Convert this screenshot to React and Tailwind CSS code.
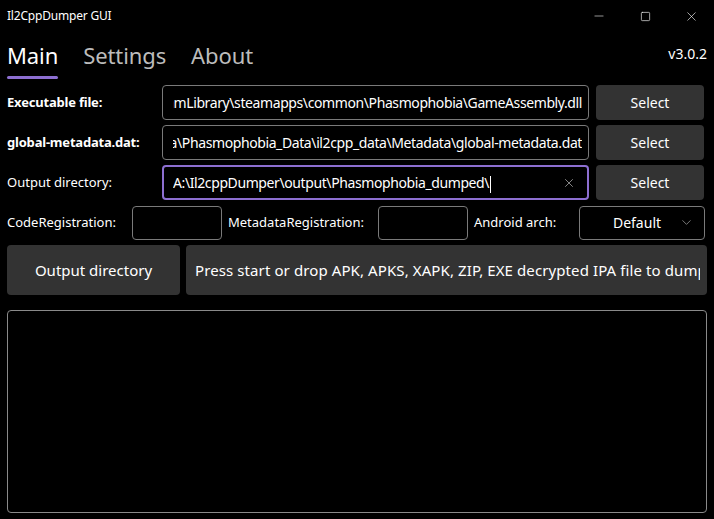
import { X, Minus, Square, ChevronDown } from 'lucide-react'

const FONT = { fontFamily: '"Noto Sans", "Open Sans", sans-serif' }

const PathBox = ({ value, focused }) => (
  <div
    className={
      'relative h-[35px] w-[427px] rounded-[4px] flex items-center ' +
      (focused ? 'border-2 border-[#8d6fd1] pl-[9px] pr-[30px]' : 'border border-[#7a7a7a] pl-[10px] pr-[6px]')
    }
  >
    <div className={'flex-1 min-w-0 flex overflow-hidden ' + (focused ? '' : 'justify-end')}>
      <span className="whitespace-nowrap text-[14px] text-white tracking-[-0.4px]">
        {value}
        {focused && <span className="inline-block w-px h-[17px] bg-white align-middle ml-px" />}
      </span>
    </div>
    {focused && (
      <X size={14} strokeWidth={1.2} className="absolute right-[11px] top-[9px] text-[#bdbdbd]" />
    )}
  </div>
)

const SelectBtn = () => (
  <button className="h-[35px] w-[108px] rounded-[4px] bg-[#333333] text-white text-[14px]">Select</button>
)

const Row = ({ label, bold, value, focused }) => (
  <div className="flex items-center h-[35px]">
    <div className={'w-[155px] text-white text-[13px] whitespace-nowrap ' + (bold ? 'font-bold tracking-[-0.2px]' : '')}>{label}</div>
    <PathBox value={value} focused={focused} />
    <div className="ml-[7px]">
      <SelectBtn />
    </div>
  </div>
)

const SmallBox = () => <div className="h-[34px] w-[90px] rounded-[4px] border border-[#7a7a7a]" />

export default function App() {
  return (
    <div className="w-[714px] h-[519px] bg-black text-white overflow-hidden" style={FONT}>
      {/* Title bar */}
      <div className="h-[32px] flex items-center justify-between">
        <div className="pl-[7px] text-[12px] tracking-[-0.2px]">Il2CppDumper GUI</div>
        <div className="flex items-center h-full">
          <div className="w-[46px] flex justify-center"><Minus size={14} strokeWidth={1} /></div>
          <div className="w-[46px] flex justify-center"><Square size={11} strokeWidth={1.4} /></div>
          <div className="w-[46px] flex justify-center"><X size={15} strokeWidth={1} /></div>
        </div>
      </div>

      {/* Tabs */}
      <div className="h-[53px] flex items-start justify-between px-[7px]">
        <div className="flex items-start gap-[25px] text-[22px] leading-none pt-[12px] tracking-[-0.1px]">
          <div className="flex flex-col">
            <span className="text-white">Main</span>
            <span className="mt-[10px] h-[3px] w-[51px] rounded-full bg-[#8d6fd1]" />
          </div>
          <span className="text-[#bcbcbc]">Settings</span>
          <span className="text-[#bcbcbc]">About</span>
        </div>
        <div className="pt-[11px] text-[14px]">v3.0.2</div>
      </div>

      {/* Form */}
      <div className="px-[7px] flex flex-col gap-[5px]">
        <Row label="Executable file:" bold value="D:\SteamLibrary\steamapps\common\Phasmophobia\GameAssembly.dll" />
        <Row label="global-metadata.dat:" bold value="D:\SteamLibrary\steamapps\common\Phasmophobia\Phasmophobia_Data\il2cpp_data\Metadata\global-metadata.dat" />
        <Row label="Output directory:" value="A:\Il2cppDumper\output\Phasmophobia_dumped\" focused />

        <div className="flex items-center h-[35px] text-[13px]">
          <span className="w-[125px]">CodeRegistration:</span>
          <SmallBox />
          <span className="ml-[6px] w-[150px]">MetadataRegistration:</span>
          <SmallBox />
          <span className="ml-[6px] w-[105px]">Android arch:</span>
          <div className="relative h-[34px] w-[126px] rounded-[4px] border border-[#7a7a7a] flex items-center justify-center">
            <span className="text-[14px] mr-[10px]">Default</span>
            <ChevronDown size={15} strokeWidth={1} className="absolute right-[10px] text-[#bdbdbd]" />
          </div>
        </div>

        <div className="flex gap-[6px] h-[50px]">
          <button className="w-[173px] h-full rounded-[4px] bg-[#333333] text-[15px]">Output directory</button>
          <div className="flex-1 min-w-0 h-full rounded-[4px] bg-[#333333] flex items-center pl-[9px] pr-[7px]">
            <div className="flex-1 min-w-0 overflow-hidden">
              <span className="whitespace-nowrap text-[15px] tracking-[0.1px]">
                Press start or drop APK, APKS, XAPK, ZIP, EXE decrypted IPA file to dump
              </span>
            </div>
          </div>
        </div>

        <div className="mt-[10px] h-[203px] rounded-[4px] border border-[#8a8a8a]" />
      </div>
    </div>
  )
}
